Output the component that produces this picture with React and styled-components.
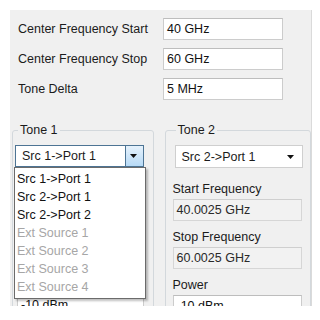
import React from 'react';
import styled, { createGlobalStyle } from 'styled-components';

const GlobalStyle = createGlobalStyle`
  html, body {
    margin: 0;
    padding: 0;
    background: #ffffff;
  }
  body {
    font-family: "Liberation Sans", Arial, sans-serif;
    font-size: 12.5px;
    color: #1b1b1b;
  }
`;

const Panel = styled.div`
  margin: 10px 0 0 10px;
  width: 302px;
  height: 296px;
  box-sizing: border-box;
  background: #f0f0f0;
  border-right: 1px solid #dadada;
  overflow: hidden;
`;

const Settings = styled.div`
  display: grid;
  grid-template-columns: 145px 120px;
  row-gap: 8px;
  align-items: center;
  padding: 8px 0 0 8px;
`;

const Label = styled.div`
  line-height: 20px;
  white-space: nowrap;
`;

const TextBox = styled.div`
  height: 22px;
  box-sizing: border-box;
  padding: 0 3px;
  line-height: 20px;
  white-space: nowrap;
  background: ${p => (p.$disabled ? '#f2f2f2' : '#ffffff')};
  border: 1px solid ${p => (p.$disabled ? '#d6d6d6' : '#cccccc')};
  border-top-color: ${p => (p.$disabled ? '#cfcfcf' : '#bdbdbd')};
  color: ${p => (p.$disabled ? '#2a2a2a' : '#111111')};
`;

const Tones = styled.div`
  display: flex;
  gap: 11px;
  padding: 22px 0 0 2px;
`;

const Group = styled.fieldset`
  margin: 0;
  min-width: 0;
  width: ${p => p.$width}px;
  box-sizing: border-box;
  padding: 7px ${p => p.$right}px 0 ${p => p.$left}px;
  border: 1px solid #d3d8dc;
  border-radius: 3px;
`;

const Legend = styled.legend`
  margin-left: 3px;
  padding: 0 2px;
  line-height: 16px;
`;

const ComboWrap = styled.div`
  position: relative;
  margin: 0 ${p => p.$mr}px 0 ${p => p.$ml}px;
`;

const Combo = styled.div`
  display: flex;
  align-items: center;
  height: ${p => (p.$open ? 22 : 23)}px;
  box-sizing: border-box;
  padding-left: 6px;
  background: #ffffff;
  border: 1px solid ${p => (p.$open ? '#4d7494' : '#cfcfcf')};
`;

const ComboText = styled.span`
  flex: 1;
  white-space: nowrap;
`;

const ComboButton = styled.div`
  display: flex;
  align-items: center;
  justify-content: center;
  align-self: stretch;
  width: ${p => (p.$open ? 18 : 16)}px;
  box-sizing: border-box;
  background: ${p =>
    p.$open ? 'linear-gradient(#e6f2fc 0%, #cfe6f9 50%, #b7daf6 100%)' : 'transparent'};
  border-left: ${p => (p.$open ? '1px solid #4d7494' : 'none')};
  margin-right: ${p => (p.$open ? 0 : 3)}px;
`;

const DropList = styled.ul`
  position: absolute;
  top: 100%;
  left: -1px;
  z-index: 2;
  width: 132px;
  box-sizing: border-box;
  margin: 0;
  padding: 2px 0;
  list-style: none;
  background: #ffffff;
  border: 1px solid #6b6b6b;
  box-shadow: 2px 2px 2px rgba(0, 0, 0, 0.25);
`;

const DropItem = styled.li`
  height: 18px;
  line-height: 18px;
  padding-left: 2px;
  white-space: nowrap;
  color: ${p => (p.$disabled ? '#a6a6a6' : '#111111')};
`;

const Field = styled.div`
  margin-left: ${p => p.$inset}px;
  margin-top: ${p => (p.$first ? 11 : 6)}px;
`;

const Arrow = () => (
  <svg width="8" height="4" viewBox="0 0 8 4">
    <path d="M0 0 H7 L3.5 4 Z" fill="#111" />
  </svg>
);

const options = [
  { name: 'Src 1->Port 1' },
  { name: 'Src 2->Port 1' },
  { name: 'Src 2->Port 2' },
  { name: 'Ext Source 1', disabled: true },
  { name: 'Ext Source 2', disabled: true },
  { name: 'Ext Source 3', disabled: true },
  { name: 'Ext Source 4', disabled: true },
];

const ToneFields = ({ inset, start, stop, power }) => (
  <>
    <Field $inset={inset} $first>
      <Label>Start Frequency</Label>
      <TextBox $disabled>{start}</TextBox>
    </Field>
    <Field $inset={inset}>
      <Label>Stop Frequency</Label>
      <TextBox $disabled>{stop}</TextBox>
    </Field>
    <Field $inset={inset}>
      <Label>Power</Label>
      <TextBox>{power}</TextBox>
    </Field>
  </>
);

export default function App() {
  return (
    <>
      <GlobalStyle />
      <Panel>
        <Settings>
          <Label>Center Frequency Start</Label>
          <TextBox>40 GHz</TextBox>
          <Label>Center Frequency Stop</Label>
          <TextBox>60 GHz</TextBox>
          <Label>Tone Delta</Label>
          <TextBox>5 MHz</TextBox>
        </Settings>

        <Tones>
          <Group $width={142} $left={2} $right={9}>
            <Legend>Tone 1</Legend>
            <ComboWrap $ml={0} $mr={0}>
              <Combo $open>
                <ComboText>Src 1-&gt;Port 1</ComboText>
                <ComboButton $open>
                  <Arrow />
                </ComboButton>
              </Combo>
              <DropList>
                {options.map(o => (
                  <DropItem key={o.name} $disabled={o.disabled}>
                    {o.name}
                  </DropItem>
                ))}
              </DropList>
            </ComboWrap>
            <ToneFields inset={2} start="40 GHz" stop="60 GHz" power="-10 dBm" />
          </Group>

          <Group $width={147} $left={7} $right={8}>
            <Legend>Tone 2</Legend>
            <ComboWrap $ml={2} $mr={-1}>
              <Combo>
                <ComboText>Src 2-&gt;Port 1</ComboText>
                <ComboButton>
                  <Arrow />
                </ComboButton>
              </Combo>
            </ComboWrap>
            <ToneFields inset={0} start="40.0025 GHz" stop="60.0025 GHz" power="-10 dBm" />
          </Group>
        </Tones>
      </Panel>
    </>
  );
}
